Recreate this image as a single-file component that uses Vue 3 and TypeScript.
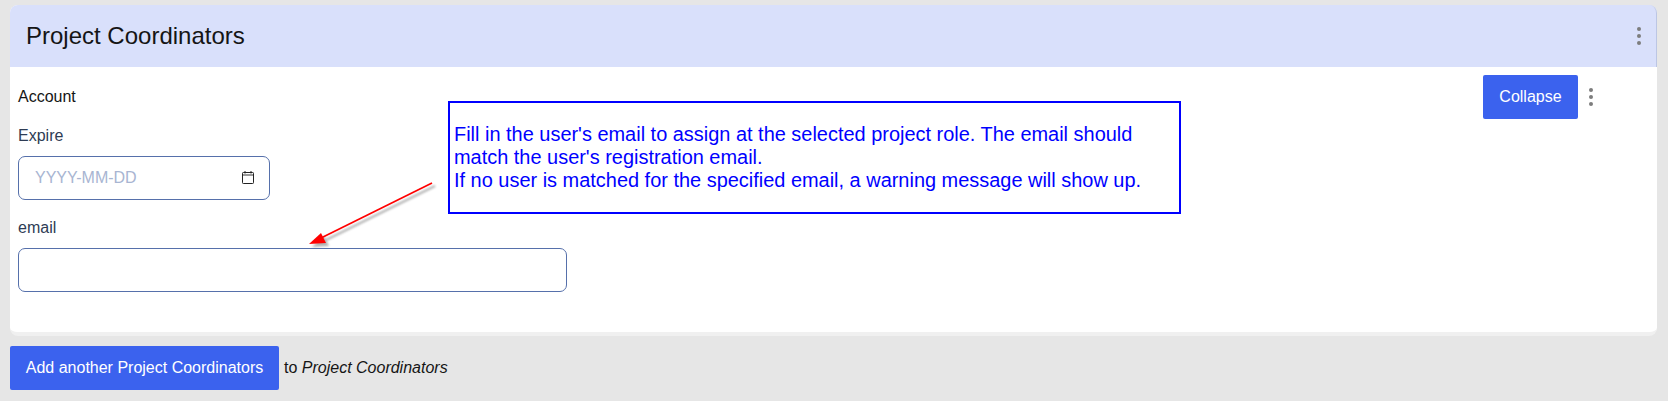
<script setup lang="ts">
const dots = [0, 1, 2]
</script>

<template>
  <div class="page">
    <section class="card">
      <header class="card-head">
        <h2 class="title">Project Coordinators</h2>
        <span class="dots head-dots"><i v-for="d in dots" :key="d"></i></span>
      </header>
      <div class="card-body">
        <div class="account-row">
          <span class="account">Account</span>
          <div class="actions">
            <button class="btn collapse" type="button">Collapse</button>
            <span class="dots"><i v-for="d in dots" :key="d"></i></span>
          </div>
        </div>
        <label class="label expire">Expire</label>
        <div class="field date">
          <input class="input" type="text" placeholder="YYYY-MM-DD" />
          <svg class="cal" viewBox="0 0 12 13" width="12" height="13" aria-hidden="true">
            <rect x="0.5" y="1.5" width="11" height="11" rx="0.8" fill="none" stroke="#222" />
            <rect x="1" y="3" width="10" height="2" fill="#999" />
            <path d="M3 0v2.5M9 0v2.5" stroke="#222" stroke-width="1" />
          </svg>
        </div>
        <label class="label email">email</label>
        <div class="field wide">
          <input class="input" type="text" />
        </div>
      </div>

      <div class="note">
        Fill in the user's email to assign at the selected project role. The email should<br />
        match the user's registration email.<br />
        If no user is matched for the specified email, a warning message will show up.
      </div>
      <svg class="arrow" viewBox="0 0 140 80" width="140" height="80" aria-hidden="true">
        <defs>
          <filter id="soft" x="-20%" y="-20%" width="140%" height="140%">
            <feGaussianBlur stdDeviation="1.1" />
          </filter>
        </defs>
        <g transform="translate(3 3)" opacity="0.45" filter="url(#soft)">
          <path d="M125 5 L12 61" stroke="#555" stroke-width="2" fill="none" />
          <path d="M2 66 L14 55 L19 65 Z" fill="#555" />
        </g>
        <path d="M125 5 L12 61" stroke="#f00" stroke-width="1.7" fill="none" />
        <path d="M2 66 L14 55 L19 65 Z" fill="#f00" />
      </svg>
    </section>

    <div class="footer">
      <button class="btn add" type="button">Add another Project Coordinators</button>
      <span class="to">to <em>Project Coordinators</em></span>
    </div>
  </div>
</template>

<style>
html,
body {
  margin: 0;
  background: #e6e6e6;
}
</style>

<style scoped>
.page {
  box-sizing: border-box;
  height: 401px;
  padding: 5px 11px 0 10px;
  background: #e6e6e6;
  font-family: "Liberation Sans", Arial, sans-serif;
  color: #111;
  overflow: hidden;
}

.card {
  position: relative;
  box-sizing: border-box;
  height: 331px;
  background: #fff;
  border-radius: 8px;
  border-bottom: 4px solid #f0f0f0;
}

.card-head {
  display: flex;
  align-items: center;
  justify-content: space-between;
  box-sizing: border-box;
  height: 62px;
  padding: 0 15px 0 16px;
  background: #d9e0fb;
  border-radius: 8px 8px 0 0;
  border-right: 1px solid #bcc6e4;
}

.title {
  margin: 0;
  font-size: 24px;
  font-weight: 400;
  color: #151515;
}

.dots {
  display: flex;
  flex-direction: column;
  gap: 3px;
}

.dots i {
  display: block;
  width: 4px;
  height: 4px;
  border-radius: 50%;
  background: #7d7d7d;
}

.card-body {
  padding: 8px 8px 0;
}

.account-row {
  display: flex;
  align-items: center;
  justify-content: space-between;
  height: 44px;
  padding-right: 56px;
}

.account {
  font-size: 16px;
  color: #151515;
}

.actions {
  display: flex;
  align-items: center;
  gap: 11px;
}

.btn {
  border: 0;
  border-radius: 2px;
  background: #3b62ee;
  color: #fff;
  font-family: inherit;
  font-size: 16px;
  padding: 0;
}

.collapse {
  width: 95px;
  height: 44px;
}

.label {
  display: block;
  font-size: 16px;
  line-height: 20px;
  color: #2e3c54;
}

.expire {
  margin-top: 7px;
}

.email {
  margin-top: 18px;
}

.field {
  position: relative;
  margin-top: 10px;
}

.date {
  width: 252px;
}

.wide {
  width: 549px;
}

.input {
  display: block;
  box-sizing: border-box;
  width: 100%;
  height: 44px;
  padding: 0 16px;
  border: 1px solid #5670ab;
  border-radius: 7px;
  background: #fff;
  font-family: inherit;
  font-size: 16px;
  outline: none;
}

.input::placeholder {
  color: #a8b5d2;
  opacity: 1;
}

.cal {
  position: absolute;
  top: 15px;
  right: 16px;
}

.note {
  position: absolute;
  left: 438px;
  top: 96px;
  box-sizing: border-box;
  width: 733px;
  height: 113px;
  padding: 20px 0 0 4px;
  border: 2px solid #00f;
  color: #00f;
  font-size: 19.95px;
  line-height: 23px;
  white-space: nowrap;
}

.arrow {
  position: absolute;
  left: 297px;
  top: 173px;
  overflow: visible;
}

.footer {
  display: flex;
  align-items: center;
  gap: 5px;
  margin-top: 10px;
}

.add {
  width: 269px;
  height: 44px;
}

.to {
  font-size: 16px;
  color: #151515;
}
</style>
